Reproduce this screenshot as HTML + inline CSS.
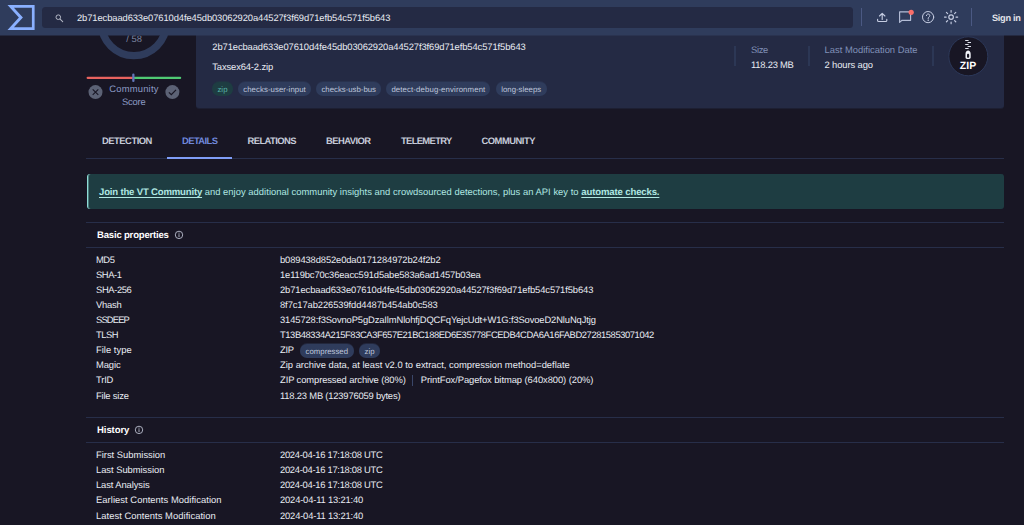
<!DOCTYPE html>
<html lang="en"><head><meta charset="utf-8"><title>VirusTotal - File - Details</title>
<style>
html,body{margin:0;padding:0;background:#181624;}
body{width:1024px;height:525px;position:relative;overflow:hidden;font-family:"Liberation Sans", sans-serif;color:#eef1f8;font-size:10px;text-rendering:geometricPrecision;}
.abs{position:absolute;display:block}
.t{position:absolute;white-space:nowrap;z-index:2}
.t.under{z-index:0}
.t span,.pill span{white-space:pre}
.hdr{position:absolute;left:0;top:0;width:1024px;height:35px;background:#2f3c5c;box-shadow:0 1px 0 rgba(47,60,92,0.5);z-index:1}
.search{position:absolute;left:42px;top:7px;width:811px;height:21px;border-radius:3.5px;background:#242a44}
.vsep{position:absolute;width:1px;background:#4b5983}
.vsep2{position:absolute;width:2px;background:#2c3755}
.card{position:absolute;left:196px;top:30px;width:808px;height:78px;border-radius:0 0 3px 3px;background:#242a44;box-shadow:0 1px 0 rgba(36,42,68,0.45);z-index:0}
.pill{position:absolute;border-radius:8px;text-align:center;white-space:nowrap;z-index:2;overflow:hidden}
.hline{position:absolute;height:1px;background:#272e49}
.banner{position:absolute;left:87px;top:174px;width:916px;height:35px;background:#1e3d42;border-left:1px solid #8fdcd6;box-shadow:inset 1px 0 0 rgba(143,220,214,0.4);border-radius:3px}
b{font-weight:700}
.u{text-decoration:underline;text-underline-offset:1.5px;text-decoration-thickness:0.8px}
.t{margin-top:0.0px}.pill span{position:relative;top:0.0px}</style></head>
<body>
<header class="hdr">
<svg class="abs" style="left:0;top:0" width="40" height="35" viewBox="0 0 40 35"><path fill="#8ab0ff" fill-rule="evenodd" d="M7.5 5.1H34.6V30H7.5L18.9 17.55Z M13.9 7.8H31.9V27.3H13.9L22.9 17.55Z"/></svg>
<div class="search"></div>
<svg class="abs" style="left:54px;top:12px" width="12" height="12" viewBox="0 0 12 12"><circle cx="4.3" cy="5.2" r="2.3" fill="none" stroke="#b2b6c4" stroke-width="1"/><path d="M6.1 7.1L8.7 9.7" stroke="#b2b6c4" stroke-width="1.05" stroke-linecap="round"/></svg>
<div class="t" style="left:77px;top:10.50px;line-height:14px;height:14px;color:#e9ecf3;"><span class="f" id="s0" style="font-size:9.40px;font-weight:400;letter-spacing:-0.098px;">2b71ecbaad633e07610d4fe45db03062920a44527f3f69d71efb54c571f5b643</span></div>
<div class="vsep" style="left:861px;top:8px;height:18px"></div>
<div class="vsep" style="left:971px;top:8px;height:18px"></div>
<svg class="abs" style="left:870px;top:4px" width="96" height="28" viewBox="870 4 96 28" fill="none" stroke="#c6cde2" stroke-width="1.15" stroke-linecap="round" stroke-linejoin="round"><path d="M882.2 19.4V13.5M879.5 16L882.2 13.3L884.9 16M877.6 19.4V20.4Q877.6 21.5 878.7 21.5H885.7Q886.8 21.5 886.8 20.4V19.4"/><path d="M899.6 11.9H910.6V20.3H902L899.6 22.4Z" stroke="#b4bdd6"/><circle cx="911.2" cy="12.3" r="2.6" fill="#fa6e69" stroke="none"/><circle cx="928.1" cy="17.1" r="5.6" stroke-width="1"/><path d="M926.4 15.6C926.4 13.4 929.8 13.4 929.8 15.6C929.8 17 928.1 17 928.1 18.5" stroke-width="1"/><circle cx="928.1" cy="20.2" r="0.35" stroke-width="0.7"/><circle cx="951.1" cy="17.1" r="2.3" stroke-width="1.2"/><path d="M951.1 10.50V12.20" transform="rotate(0 951.1 17.1)"/><path d="M951.1 10.50V12.20" transform="rotate(45 951.1 17.1)"/><path d="M951.1 10.50V12.20" transform="rotate(90 951.1 17.1)"/><path d="M951.1 10.50V12.20" transform="rotate(135 951.1 17.1)"/><path d="M951.1 10.50V12.20" transform="rotate(180 951.1 17.1)"/><path d="M951.1 10.50V12.20" transform="rotate(225 951.1 17.1)"/><path d="M951.1 10.50V12.20" transform="rotate(270 951.1 17.1)"/><path d="M951.1 10.50V12.20" transform="rotate(315 951.1 17.1)"/></svg>
<div class="t" style="left:992px;top:10.60px;line-height:14px;height:14px;color:#ffffff;"><span class="f" id="s1" style="font-size:9.21px;font-weight:600;letter-spacing:-0.296px;color:#e4e5ea;">Sign in</span></div>
</header>
<svg class="abs" style="left:80px;top:0" width="110" height="110" viewBox="80 0 110 110"><circle cx="133.85" cy="23.1" r="32.5" fill="none" stroke="#2f3c5c" stroke-width="7.4"/><rect x="86.6" y="76.7" width="46.5" height="2.3" rx="1.1" fill="#e8635f"/><rect x="133.6" y="76.7" width="47.6" height="2.3" rx="1.1" fill="#4fc973"/><rect x="132.2" y="73.6" width="2.3" height="8.4" rx="1.1" fill="#6277ba"/><circle cx="95.5" cy="92.1" r="7" fill="#5c6275"/><path d="M92.7 89.3L98.3 94.9M98.3 89.3L92.7 94.9" stroke="#181624" stroke-width="1.1"/><circle cx="172.4" cy="92.1" r="7" fill="#5c6275"/><path d="M168.9 92.3L171.3 94.7L176 89.8" fill="none" stroke="#181624" stroke-width="1.2"/></svg>
<div class="t under" style="left:126.3px;top:31.60px;line-height:14px;height:14px;color:#7d87a3;"><span class="f" id="s2" style="font-size:9.40px;font-weight:400;letter-spacing:-0.031px;">/ 58</span></div>
<div class="t" style="left:109.3px;top:81.90px;line-height:14px;height:14px;color:#8c9bc4;"><span class="f" id="s3" style="font-size:9.40px;font-weight:400;letter-spacing:0.215px;">Community</span></div>
<div class="t" style="left:122.0px;top:94.90px;line-height:14px;height:14px;color:#8c9bc4;"><span class="f" id="s4" style="font-size:9.40px;font-weight:400;letter-spacing:-0.191px;">Score</span></div>
<section class="card">
</section>
<div class="t" style="left:212.3px;top:39.60px;line-height:14px;height:14px;color:#e9ecf3;"><span class="f" id="s5" style="font-size:9.40px;font-weight:400;letter-spacing:-0.098px;">2b71ecbaad633e07610d4fe45db03062920a44527f3f69d71efb54c571f5b643</span></div>
<div class="t" style="left:212.3px;top:59.60px;line-height:14px;height:14px;color:#e9ecf3;"><span class="f" id="s6" style="font-size:9.40px;font-weight:400;letter-spacing:-0.131px;">Taxsex64-2.zip</span></div>
<div class="pill" style="left:212.3px;top:82.0px;width:20.4px;height:14px;line-height:14px;background:#1e3d42;color:#57b4a6;box-shadow:0 -1px 0 rgba(30,61,66,0.45)"><span class="f" id="s7" style="font-size:7.80px;font-weight:400;letter-spacing:0.086px;position:relative;top:1px;">zip</span></div>
<div class="pill" style="left:238px;top:82.0px;width:73.1px;height:14px;line-height:14px;background:#2f3c5c;color:#ccd3e7;box-shadow:0 -1px 0 rgba(47,60,92,0.45)"><span class="f" id="s8" style="font-size:7.80px;font-weight:400;letter-spacing:0.061px;position:relative;top:1px;color:#bfc6db;">checks-user-input</span></div>
<div class="pill" style="left:316px;top:82.0px;width:65.4px;height:14px;line-height:14px;background:#2f3c5c;color:#ccd3e7;box-shadow:0 -1px 0 rgba(47,60,92,0.45)"><span class="f" id="s9" style="font-size:7.80px;font-weight:400;letter-spacing:-0.011px;position:relative;top:1px;color:#bfc6db;">checks-usb-bus</span></div>
<div class="pill" style="left:386.4px;top:82.0px;width:104px;height:14px;line-height:14px;background:#2f3c5c;color:#ccd3e7;box-shadow:0 -1px 0 rgba(47,60,92,0.45)"><span class="f" id="s10" style="font-size:7.80px;font-weight:400;letter-spacing:0.124px;position:relative;top:1px;color:#bfc6db;">detect-debug-environment</span></div>
<div class="pill" style="left:495.7px;top:82.0px;width:51px;height:14px;line-height:14px;background:#2f3c5c;color:#ccd3e7;box-shadow:0 -1px 0 rgba(47,60,92,0.45)"><span class="f" id="s11" style="font-size:7.80px;font-weight:400;letter-spacing:0.007px;position:relative;top:1px;color:#bfc6db;">long-sleeps</span></div>
<div class="vsep2" style="left:734px;top:45.5px;height:20.5px"></div>
<div class="vsep2" style="left:808px;top:45.5px;height:20.5px"></div>
<div class="vsep2" style="left:932px;top:45.5px;height:20.5px"></div>
<div class="t" style="left:751px;top:42.90px;line-height:14px;height:14px;color:#8191b8;"><span class="f" id="s12" style="font-size:9.40px;font-weight:400;letter-spacing:-0.315px;">Size</span></div>
<div class="t" style="left:751px;top:57.80px;line-height:14px;height:14px;color:#e9ecf3;"><span class="f" id="s13" style="font-size:9.40px;font-weight:400;letter-spacing:-0.221px;">118.23 MB</span></div>
<div class="t" style="left:824.5px;top:42.90px;line-height:14px;height:14px;color:#8191b8;"><span class="f" id="s14" style="font-size:9.40px;font-weight:400;letter-spacing:0.014px;">Last Modification Date</span></div>
<div class="t" style="left:824.5px;top:57.80px;line-height:14px;height:14px;color:#e9ecf3;"><span class="f" id="s15" style="font-size:9.40px;font-weight:400;letter-spacing:-0.098px;">2 hours ago</span></div>
<svg class="abs" style="left:944px;top:32px" width="50" height="50" viewBox="944 32 50 50"><circle cx="968.3" cy="56.3" r="19.5" fill="#181624" stroke="#2c3859" stroke-width="1"/><g stroke="#dfe2ec" stroke-width="1"><path d="M965.2 40.5h3.4"/><path d="M967.6 42.5h3.4"/><path d="M965.2 44.5h3.4"/><path d="M967.6 46.5h3.4"/><path d="M965.2 48.5h3.4"/></g><path fill="#f2f4fa" fill-rule="evenodd" d="M968.1 50.6C969.6 50.6 970.7 52 970.7 54V57.6C970.7 58.5 970 59 969.2 59H967C966.2 59 965.5 58.5 965.5 57.6V54C965.5 52 966.6 50.6 968.1 50.6Z M968.1 53.7C967.5 53.7 967 54.2 967 54.8V56.7C967 57.3 967.5 57.8 968.1 57.8C968.7 57.8 969.2 57.3 969.2 56.7V54.8C969.2 54.2 968.7 53.7 968.1 53.7Z"/></svg>
<div class="t" style="left:959.8px;top:58.20px;line-height:14px;height:14px;color:#ffffff;"><span class="f" id="s16" style="font-size:10.50px;font-weight:700;position:relative;top:0.5px;">ZIP</span></div>
<div class="hline" style="left:86px;top:158px;width:918px"></div>
<nav>
<div class="t" style="left:102px;top:134.00px;line-height:14px;height:14px;color:#dfe4f2;"><span class="f" id="s17" style="font-size:9.40px;font-weight:600;letter-spacing:-0.476px;color:#c6cbd9;">DETECTION</span></div>
<div class="t" style="left:182px;top:134.00px;line-height:14px;height:14px;color:#7f9df7;"><span class="f" id="s18" style="font-size:9.40px;font-weight:600;letter-spacing:-0.567px;color:#7088dc;">DETAILS</span></div>
<div class="t" style="left:247.5px;top:134.00px;line-height:14px;height:14px;color:#dfe4f2;"><span class="f" id="s19" style="font-size:9.40px;font-weight:600;letter-spacing:-0.557px;color:#c6cbd9;">RELATIONS</span></div>
<div class="t" style="left:326px;top:134.00px;line-height:14px;height:14px;color:#dfe4f2;"><span class="f" id="s20" style="font-size:9.40px;font-weight:600;letter-spacing:-0.546px;color:#c6cbd9;">BEHAVIOR</span></div>
<div class="t" style="left:401px;top:134.00px;line-height:14px;height:14px;color:#dfe4f2;"><span class="f" id="s21" style="font-size:9.40px;font-weight:600;letter-spacing:-0.649px;color:#c6cbd9;">TELEMETRY</span></div>
<div class="t" style="left:481.5px;top:134.00px;line-height:14px;height:14px;color:#dfe4f2;"><span class="f" id="s22" style="font-size:9.40px;font-weight:600;letter-spacing:-0.475px;color:#c6cbd9;">COMMUNITY</span></div>
</nav>
<div class="abs" style="left:166.5px;top:157px;width:65.5px;height:2px;background:#7f9df7"></div>
<div class="banner"></div>
<div class="t" style="left:99px;top:184.50px;line-height:14px;height:14px;color:#b0e8e3;"><b class="u"><span class="f" id="s23" style="font-size:9.55px;font-weight:700;letter-spacing:-0.169px;">Join the VT Community</span></b><span class="f" id="s24" style="font-size:9.40px;font-weight:400;letter-spacing:0.039px;"> and enjoy additional community insights and crowdsourced detections, plus an API key to </span><b class="u"><span class="f" id="s25" style="font-size:9.55px;font-weight:700;letter-spacing:-0.126px;">automate checks.</span></b></div>
<div class="hline" style="left:86px;top:222px;width:918px"></div>
<div class="hline" style="left:86px;top:247px;width:918px"></div>
<div class="t" style="left:97px;top:228.00px;line-height:14px;height:14px;color:#ffffff;"><span class="f" id="s26" style="font-size:9.55px;font-weight:700;letter-spacing:-0.193px;position:relative;top:1px;">Basic properties</span></div>
<svg class="abs" style="left:173.5px;top:230.0px" width="10" height="10" viewBox="0 0 10 10" fill="none" stroke="#c3c8d8" stroke-width="0.85"><circle cx="5" cy="4.9" r="3.7"/><path d="M5 4.6V6.7M5 3V3.3" stroke-linecap="round"/></svg>
<div class="t" style="left:96px;top:252.60px;line-height:14px;height:14px;color:#e9ecf3;"><span class="f" id="s37" style="font-size:9.40px;font-weight:400;letter-spacing:-0.444px;">MD5</span></div>
<div class="t" style="left:280px;top:252.60px;line-height:14px;height:14px;color:#e9ecf3;"><span class="f" id="s27" style="font-size:9.40px;font-weight:400;letter-spacing:-0.116px;">b089438d852e0da0171284972b24f2b2</span></div>
<div class="t" style="left:96px;top:267.71px;line-height:14px;height:14px;color:#e9ecf3;"><span class="f" id="s38" style="font-size:9.40px;font-weight:400;letter-spacing:-0.430px;">SHA-1</span></div>
<div class="t" style="left:280px;top:267.71px;line-height:14px;height:14px;color:#e9ecf3;"><span class="f" id="s28" style="font-size:9.40px;font-weight:400;letter-spacing:-0.128px;">1e119bc70c36eacc591d5abe583a6ad1457b03ea</span></div>
<div class="t" style="left:96px;top:282.82px;line-height:14px;height:14px;color:#e9ecf3;"><span class="f" id="s39" style="font-size:9.40px;font-weight:400;letter-spacing:-0.370px;">SHA-256</span></div>
<div class="t" style="left:280px;top:282.82px;line-height:14px;height:14px;color:#e9ecf3;"><span class="f" id="s29" style="font-size:9.40px;font-weight:400;letter-spacing:-0.098px;">2b71ecbaad633e07610d4fe45db03062920a44527f3f69d71efb54c571f5b643</span></div>
<div class="t" style="left:96px;top:297.93px;line-height:14px;height:14px;color:#e9ecf3;"><span class="f" id="s40" style="font-size:9.40px;font-weight:400;letter-spacing:-0.245px;">Vhash</span></div>
<div class="t" style="left:280px;top:297.93px;line-height:14px;height:14px;color:#e9ecf3;"><span class="f" id="s30" style="font-size:9.40px;font-weight:400;letter-spacing:-0.092px;">8f7c17ab226539fdd4487b454ab0c583</span></div>
<div class="t" style="left:96px;top:313.04px;line-height:14px;height:14px;color:#e9ecf3;"><span class="f" id="s41" style="font-size:9.40px;font-weight:400;letter-spacing:-0.835px;">SSDEEP</span></div>
<div class="t" style="left:280px;top:313.04px;line-height:14px;height:14px;color:#e9ecf3;"><span class="f" id="s31" style="font-size:9.40px;font-weight:400;letter-spacing:-0.119px;">3145728:f3SovnoP5gDzaIlmNlohfjDQCFqYejcUdt+W1G:f3SovoeD2NluNqJtjg</span></div>
<div class="t" style="left:96px;top:328.15px;line-height:14px;height:14px;color:#e9ecf3;"><span class="f" id="s42" style="font-size:9.40px;font-weight:400;letter-spacing:-0.505px;">TLSH</span></div>
<div class="t" style="left:280px;top:328.15px;line-height:14px;height:14px;color:#e9ecf3;"><span class="f" id="s32" style="font-size:9.40px;font-weight:400;letter-spacing:-0.411px;">T13B48334A215F83CA3F657E21BC188ED6E35778FCEDB4CDA6A16FABD272815853071042</span></div>
<div class="t" style="left:96px;top:343.26px;line-height:14px;height:14px;color:#e9ecf3;"><span class="f" id="s43" style="font-size:9.40px;font-weight:400;letter-spacing:0.021px;">File type</span></div>
<div class="t" style="left:280px;top:343.26px;line-height:14px;height:14px;color:#e9ecf3;"><span class="f" id="s33" style="font-size:9.40px;font-weight:400;letter-spacing:-0.284px;">ZIP</span></div>
<div class="t" style="left:96px;top:358.37px;line-height:14px;height:14px;color:#e9ecf3;"><span class="f" id="s44" style="font-size:9.40px;font-weight:400;letter-spacing:-0.109px;">Magic</span></div>
<div class="t" style="left:280px;top:358.37px;line-height:14px;height:14px;color:#e9ecf3;"><span class="f" id="s34" style="font-size:9.40px;font-weight:400;letter-spacing:0.005px;">Zip archive data, at least v2.0 to extract, compression method=deflate</span></div>
<div class="t" style="left:96px;top:373.48px;line-height:14px;height:14px;color:#e9ecf3;"><span class="f" id="s45" style="font-size:9.40px;font-weight:400;letter-spacing:-0.166px;">TrID</span></div>
<div class="t" style="left:280px;top:373.48px;line-height:14px;height:14px;color:#e9ecf3;"><span class="f" id="s35" style="font-size:9.40px;font-weight:400;letter-spacing:-0.100px;">ZIP compressed archive (80%)</span></div>
<div class="t" style="left:96px;top:388.59px;line-height:14px;height:14px;color:#e9ecf3;"><span class="f" id="s46" style="font-size:9.40px;font-weight:400;letter-spacing:-0.176px;">File size</span></div>
<div class="t" style="left:280px;top:388.59px;line-height:14px;height:14px;color:#e9ecf3;"><span class="f" id="s36" style="font-size:9.40px;font-weight:400;letter-spacing:-0.189px;">118.23 MB (123976059 bytes)</span></div>
<div class="pill" style="left:300px;top:344.0px;width:53.6px;height:14px;line-height:14px;background:#2f3c5c;color:#ccd3e7;box-shadow:0 -1px 0 rgba(47,60,92,0.45)"><span class="f" id="s47" style="font-size:7.80px;font-weight:400;letter-spacing:-0.011px;position:relative;top:1px;color:#bfc6db;">compressed</span></div>
<div class="pill" style="left:359px;top:344.0px;width:21.2px;height:14px;line-height:14px;background:#2f3c5c;color:#ccd3e7;box-shadow:0 -1px 0 rgba(47,60,92,0.45)"><span class="f" id="s48" style="font-size:7.80px;font-weight:400;letter-spacing:0.086px;position:relative;top:1px;color:#bfc6db;">zip</span></div>
<div class="abs" style="left:412.2px;top:375.48px;width:1px;height:11px;background:#3a4668"></div>
<div class="t" style="left:420.8px;top:373.48px;line-height:14px;height:14px;color:#e9ecf3;"><span class="f" id="s49" style="font-size:9.40px;font-weight:400;letter-spacing:-0.064px;">PrintFox/Pagefox bitmap (640x800) (20%)</span></div>
<div class="hline" style="left:86px;top:417px;width:918px"></div>
<div class="hline" style="left:86px;top:442px;width:918px"></div>
<div class="t" style="left:97px;top:423.00px;line-height:14px;height:14px;color:#ffffff;"><span class="f" id="s50" style="font-size:9.55px;font-weight:700;letter-spacing:-0.082px;position:relative;top:1px;">History</span></div>
<svg class="abs" style="left:134px;top:425.0px" width="10" height="10" viewBox="0 0 10 10" fill="none" stroke="#c3c8d8" stroke-width="0.85"><circle cx="5" cy="4.9" r="3.7"/><path d="M5 4.6V6.7M5 3V3.3" stroke-linecap="round"/></svg>
<div class="t" style="left:96px;top:448.10px;line-height:14px;height:14px;color:#e9ecf3;"><span class="f" id="s51" style="font-size:9.40px;font-weight:400;letter-spacing:-0.001px;">First Submission</span></div>
<div class="t" style="left:280px;top:448.10px;line-height:14px;height:14px;color:#e9ecf3;"><span class="f" id="s52" style="font-size:9.40px;font-weight:400;letter-spacing:-0.280px;">2024-04-16 17:18:08 UTC</span></div>
<div class="t" style="left:96px;top:463.21px;line-height:14px;height:14px;color:#e9ecf3;"><span class="f" id="s53" style="font-size:9.40px;font-weight:400;letter-spacing:-0.031px;">Last Submission</span></div>
<div class="t" style="left:280px;top:463.21px;line-height:14px;height:14px;color:#e9ecf3;"><span class="f" id="s54" style="font-size:9.40px;font-weight:400;letter-spacing:-0.280px;">2024-04-16 17:18:08 UTC</span></div>
<div class="t" style="left:96px;top:478.32px;line-height:14px;height:14px;color:#e9ecf3;"><span class="f" id="s55" style="font-size:9.40px;font-weight:400;letter-spacing:-0.094px;">Last Analysis</span></div>
<div class="t" style="left:280px;top:478.32px;line-height:14px;height:14px;color:#e9ecf3;"><span class="f" id="s56" style="font-size:9.40px;font-weight:400;letter-spacing:-0.280px;">2024-04-16 17:18:08 UTC</span></div>
<div class="t" style="left:96px;top:493.43px;line-height:14px;height:14px;color:#e9ecf3;"><span class="f" id="s57" style="font-size:9.40px;font-weight:400;letter-spacing:0.051px;">Earliest Contents Modification</span></div>
<div class="t" style="left:280px;top:493.43px;line-height:14px;height:14px;color:#e9ecf3;"><span class="f" id="s58" style="font-size:9.40px;font-weight:400;letter-spacing:-0.171px;">2024-04-11 13:21:40</span></div>
<div class="t" style="left:96px;top:508.54px;line-height:14px;height:14px;color:#e9ecf3;"><span class="f" id="s59" style="font-size:9.40px;font-weight:400;letter-spacing:0.052px;">Latest Contents Modification</span></div>
<div class="t" style="left:280px;top:508.54px;line-height:14px;height:14px;color:#e9ecf3;"><span class="f" id="s60" style="font-size:9.40px;font-weight:400;letter-spacing:-0.171px;">2024-04-11 13:21:40</span></div>
</body></html>
